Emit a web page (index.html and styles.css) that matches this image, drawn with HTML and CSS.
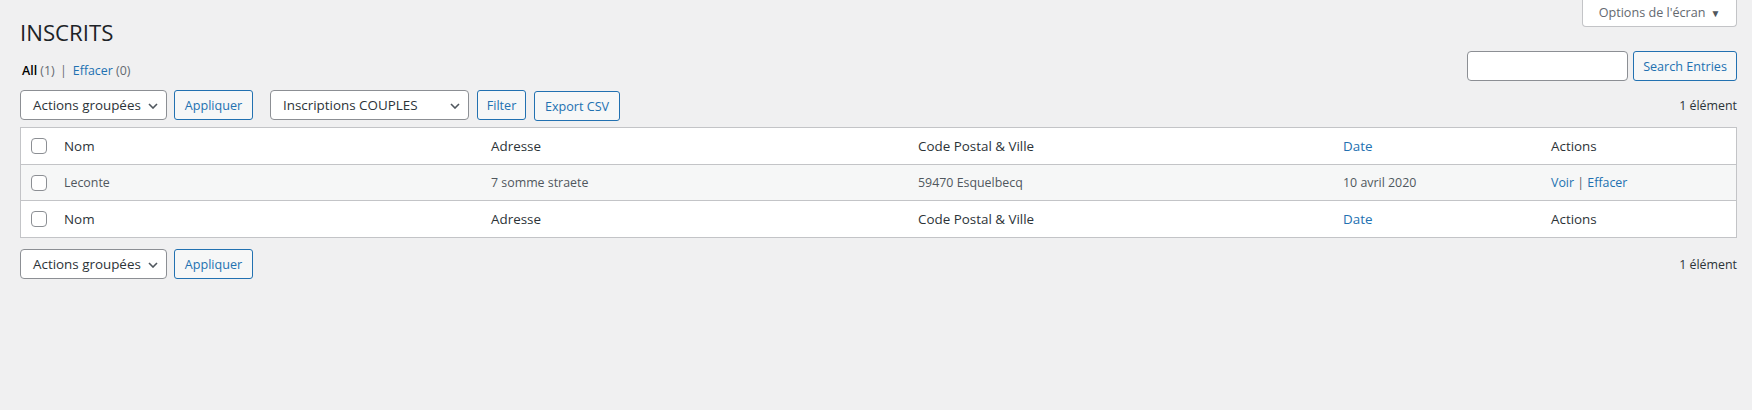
FILE: index.html
```html
<!DOCTYPE html>
<html lang="fr">
<head>
<meta charset="utf-8">
<title>Inscrits</title>
<link rel="stylesheet" href="styles.css">
</head>
<body>
<div class="wrap">
  <div class="head-row">
    <h1 class="page-title">INSCRITS</h1>
    <div class="screen-options">Options de l'écran <span class="tri">▼</span></div>
  </div>

  <div class="sub-row">
    <ul class="subsubsub">
      <li><span class="current">All</span> <span class="count">(1)</span> <span class="sep">|</span></li>
      <li><a href="#">Effacer</a> <span class="count">(0)</span></li>
    </ul>
    <div class="search-box">
      <input class="search-input" type="text">
      <span class="button">Search Entries</span>
    </div>
  </div>

  <div class="tablenav top">
    <div class="actions">
      <div class="select w-bulk">Actions groupées<svg class="chev" viewBox="0 0 10 6" width="10" height="6"><path d="M1 1l4 4 4-4" fill="none" stroke="#50575e" stroke-width="1.6"/></svg></div>
      <span class="button">Appliquer</span>
    </div>
    <div class="actions">
      <div class="select w-form">Inscriptions COUPLES<svg class="chev" viewBox="0 0 10 6" width="10" height="6"><path d="M1 1l4 4 4-4" fill="none" stroke="#50575e" stroke-width="1.6"/></svg></div>
      <span class="button">Filter</span>
      <span class="button export">Export CSV</span>
    </div>
    <div class="count-items">1 élément</div>
  </div>

  <table class="list">
    <colgroup>
      <col class="c-check"><col class="c-nom"><col class="c-adr"><col class="c-cp"><col class="c-date"><col class="c-act">
    </colgroup>
    <thead>
      <tr>
        <td class="check"><span class="cb"></span></td>
        <th>Nom</th>
        <th>Adresse</th>
        <th>Code Postal &amp; Ville</th>
        <th><a href="#">Date</a></th>
        <th>Actions</th>
      </tr>
    </thead>
    <tbody>
      <tr>
        <td class="check"><span class="cb"></span></td>
        <td>Leconte</td>
        <td>7 somme straete</td>
        <td>59470 Esquelbecq</td>
        <td>10 avril 2020</td>
        <td><a href="#">Voir</a> | <a href="#">Effacer</a></td>
      </tr>
    </tbody>
    <tfoot>
      <tr>
        <td class="check"><span class="cb"></span></td>
        <th>Nom</th>
        <th>Adresse</th>
        <th>Code Postal &amp; Ville</th>
        <th><a href="#">Date</a></th>
        <th>Actions</th>
      </tr>
    </tfoot>
  </table>

  <div class="tablenav bottom">
    <div class="actions">
      <div class="select w-bulk">Actions groupées<svg class="chev" viewBox="0 0 10 6" width="10" height="6"><path d="M1 1l4 4 4-4" fill="none" stroke="#50575e" stroke-width="1.6"/></svg></div>
      <span class="button">Appliquer</span>
    </div>
    <div class="count-items">1 élément</div>
  </div>
</div>
</body>
</html>
```

FILE: styles.css
```css
* { box-sizing: border-box; }

html, body {
  margin: 0;
  background: #f0f0f1;
}

body {
  font-family: "Open Sans", "Noto Sans", sans-serif;
  font-size: 12.4px;
  color: #3c434a;
}

a {
  color: #2271b1;
  text-decoration: none;
}

.wrap {
  padding: 0 15px 0 20px;
}

.head-row {
  display: flex;
  justify-content: space-between;
  align-items: flex-start;
}

.page-title {
  margin: 0;
  padding-top: 18px;
  font-size: 22.2px;
  font-weight: 400;
  line-height: 30px;
  color: #1d2327;
}

.screen-options {
  width: 155px;
  height: 27px;
  background: #fff;
  border: 1px solid #c3c4c7;
  border-top: none;
  border-radius: 0 0 4px 4px;
  color: #646970;
  display: flex;
  align-items: center;
  justify-content: center;
  gap: 5px;
  padding-bottom: 1px;
  font-size: 12.6px;
}

.tri {
  font-size: 10px;
  color: #50575e;
}

.sub-row {
  display: flex;
  justify-content: space-between;
  margin-top: 3px;
}

.subsubsub {
  list-style: none;
  margin: 0;
  padding: 0 0 0 2px;
  display: flex;
  align-self: flex-end;
  line-height: 20px;
  gap: 4px;
  color: #646970;
}

.subsubsub .current {
  color: #000;
  font-weight: 600;
}

.subsubsub .sep {
  margin: 0 2px;
  color: #646970;
}

.search-box {
  display: flex;
  gap: 5px;
}

.search-input {
  width: 161px;
  height: 30px;
  margin: 0;
  border: 1px solid #8c8f94;
  border-radius: 4px;
  background: #fff;
}

.button {
  display: inline-flex;
  align-items: center;
  justify-content: center;
  height: 30px;
  padding: 0 10px;
  border: 1px solid #2271b1;
  border-radius: 3px;
  background: #f6f7f7;
  color: #2271b1;
  font-size: 12.6px;
  white-space: nowrap;
}

.search-box .button {
  width: 104px;
}

.tablenav {
  display: flex;
  align-items: flex-start;
  height: 30px;
}

.tablenav.top {
  margin-top: 9px;
}

.tablenav.bottom {
  margin-top: 11px;
}

.actions {
  display: flex;
  gap: 7px;
  margin-right: 17px;
}

.actions + .actions {
  gap: 8px;
}

.select {
  position: relative;
  height: 30px;
  border: 1px solid #8c8f94;
  border-radius: 4px;
  background: #fff;
  color: #2c3338;
  font-size: 13.4px;
  display: flex;
  align-items: center;
  padding-left: 12px;
  white-space: nowrap;
}

.select .chev {
  position: absolute;
  right: 8px;
  top: 12px;
}

.w-bulk { width: 147px; }
.w-form { width: 199px; }

.tablenav .actions:first-child .button { width: 79px; }
.actions + .actions .button { width: 49px; }
.actions + .actions .button.export {
  width: 86px;
  margin-top: 1px;
}

.count-items {
  margin-left: auto;
  align-self: center;
  color: #2c3338;
  font-size: 12.4px;
}

.list {
  width: 100%;
  margin-top: 7px;
  border-collapse: separate;
  border-spacing: 0;
  table-layout: fixed;
  background: #fff;
  border: 1px solid #c3c4c7;
}

.c-check { width: 33px; }
.c-nom { width: 427px; }
.c-adr { width: 427px; }
.c-cp { width: 425px; }
.c-date { width: 208px; }
.c-act { width: 195px; }

.list th,
.list td {
  text-align: left;
  font-weight: 400;
  padding: 0 10px;
  vertical-align: middle;
}

.list thead th,
.list thead td {
  height: 37px;
  border-bottom: 1px solid #c3c4c7;
  font-size: 13.4px;
  color: #2c3338;
}

.list tfoot th,
.list tfoot td {
  height: 37px;
  border-top: 1px solid #c3c4c7;
  font-size: 13.4px;
  color: #2c3338;
}

.list tbody td {
  height: 35px;
  background: #f6f7f7;
  font-size: 12.4px;
  color: #50575e;
}

.list td.check {
  padding: 0 0 0 10px;
}

.cb {
  display: block;
  width: 16px;
  height: 16px;
  border: 1px solid #8c8f94;
  border-radius: 4px;
  background: #fff;
}
```
